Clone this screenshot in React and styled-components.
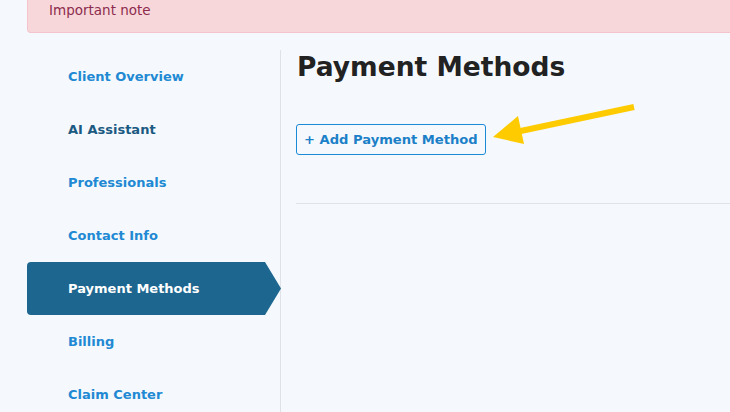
import React from 'react';
import styled, { createGlobalStyle } from 'styled-components';

const GlobalStyle = createGlobalStyle`
  html, body {
    margin: 0;
    padding: 0;
    background: #f5f9fd;
    font-family: "DejaVu Sans", "Open Sans", sans-serif;
  }
  * { box-sizing: border-box; }
`;

const Page = styled.div`
  position: relative;
  width: 730px;
  height: 412px;
  overflow: hidden;
  padding-left: 27px;
`;

const Alert = styled.div`
  height: 33px;
  width: 720px;
  padding-left: 21px;
  background: #f8d7da;
  border: 1px solid #f3c4cb;
  border-top: none;
  border-radius: 0 0 0 4px;
  color: #8c2c4e;
  font-size: 13.5px;
  line-height: 20px;
`;

const Layout = styled.div`
  display: flex;
  margin-top: 17px;
`;

const Sidebar = styled.nav`
  width: 254px;
  flex-shrink: 0;
  border-right: 1px solid #dfe3e8;
  height: 400px;
`;

const NavItem = styled.div`
  width: 254px;
  height: 53px;
  display: flex;
  align-items: center;
  padding-left: 41px;
  font-size: 13px;
  font-weight: 600;
  color: ${p => (p.$dark ? '#1c5a82' : '#2189d3')};
  ${p => p.$active && `
    background: #1c668f;
    color: #ffffff;
    border-radius: 4px 0 0 4px;
    clip-path: polygon(0 0, calc(100% - 16px) 0, 100% 50%, calc(100% - 16px) 100%, 0 100%);
  `}
`;

const Main = styled.main`
  flex: 1;
  padding-left: 15px;
`;

const Title = styled.h1`
  margin: 0;
  padding-left: 1px;
  font-size: 26.5px;
  line-height: 34px;
  font-weight: 700;
  color: #222222;
`;

const AddButton = styled.button`
  margin-top: 40px;
  height: 31px;
  padding: 0 7px;
  background: transparent;
  border: 1px solid #1b8ad8;
  border-radius: 3px;
  color: #1b80c8;
  font-family: inherit;
  font-size: 13.1px;
  font-weight: 700;
`;

const Divider = styled.hr`
  margin: 48px 0 0;
  border: none;
  border-top: 1px solid #dfe3e8;
`;

const Annotation = styled.svg`
  position: absolute;
  left: 490px;
  top: 95px;
`;

const items = [
  { label: 'Client Overview' },
  { label: 'AI Assistant', dark: true },
  { label: 'Professionals' },
  { label: 'Contact Info' },
  { label: 'Payment Methods', active: true },
  { label: 'Billing' },
  { label: 'Claim Center' },
];

export default function App() {
  return (
    <Page>
      <GlobalStyle />
      <Alert>Important note</Alert>
      <Layout>
        <Sidebar>
          {items.map(item => (
            <NavItem key={item.label} $active={item.active} $dark={item.dark}>
              {item.label}
            </NavItem>
          ))}
        </Sidebar>
        <Main>
          <Title>Payment Methods</Title>
          <AddButton>+ Add Payment Method</AddButton>
          <Divider />
        </Main>
      </Layout>
      <Annotation width="160" height="60" viewBox="0 0 160 60">
        <line x1="144" y1="12" x2="26" y2="37" stroke="#fecb00" strokeWidth="6" />
        <polygon points="3,42 28,21 34,49" fill="#fecb00" />
      </Annotation>
    </Page>
  );
}
